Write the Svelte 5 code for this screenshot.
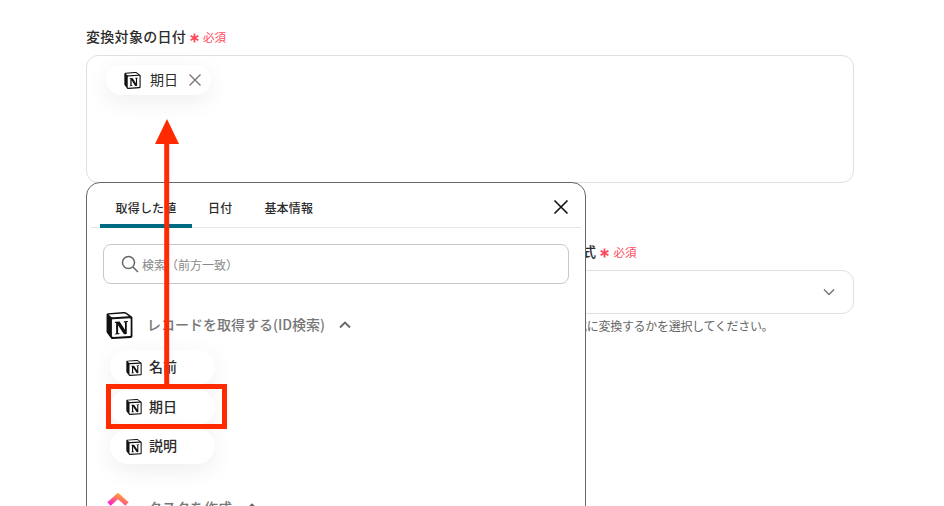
<script>
  const tabs = ["取得した値", "日付", "基本情報"];
  const fields = ["名前", "期日", "説明"];
</script>

{#snippet notion(size)}
  <svg class="notion" width={size} height={size} viewBox="0 0 24 24">
    <path fill="#fff" d="M2 2l15-1 5 4v17l-17 1-4-5z" />
    <path fill="#111" d="M4.459 4.208c.746.606 1.026.56 2.428.466l13.215-.793c.28 0 .047-.28-.046-.326L17.86 1.968c-.42-.326-.981-.7-2.055-.607L3.01 2.295c-.466.046-.56.28-.374.466zm.793 3.08v13.904c0 .747.373 1.027 1.214.98l14.523-.84c.841-.046.935-.56.935-1.167V6.354c0-.606-.233-.933-.748-.887l-15.177.887c-.56.047-.747.327-.747.933zm14.337.745c.093.42 0 .84-.42.888l-.7.14v10.264c-.608.327-1.168.514-1.635.514-.748 0-.935-.234-1.495-.933l-4.577-7.186v6.952L12.21 19s0 .84-1.168.84l-3.222.186c-.093-.186 0-.653.327-.746l.84-.233V9.854L7.822 9.76c-.094-.42.14-1.026.793-1.073l3.456-.233 4.764 7.279v-6.44l-1.215-.14c-.093-.514.28-.887.747-.933zM1.936 1.035l13.31-.98c1.634-.14 2.055-.047 3.082.7l4.249 2.986c.7.513.934.653.934 1.213v16.378c0 1.026-.373 1.634-1.68 1.726l-15.458.934c-.98.047-1.448-.093-1.962-.747l-3.129-4.06c-.56-.747-.793-1.306-.793-1.96V2.667c0-.839.374-1.54 1.447-1.632z" />
  </svg>
{/snippet}

{#snippet required()}
  <span class="req">
    <svg class="star" width="9" height="10" viewBox="0 0 9 10">
      <path d="M4.500 0.500V9.500M0.600 2.700L8.400 7.300M8.400 2.700L0.600 7.300" />
    </svg>
    必須
  </span>
{/snippet}

<div class="page">
  <div class="form">
    <div class="field first">
      <div class="label">変換対象の日付{@render required()}</div>
      <div class="textarea">
        <span class="chip selected">
          {@render notion(17)}
          <span class="chip-text">期日</span>
          <svg width="12" height="12" viewBox="0 0 12 12" class="remove">
            <path d="M0.500 0.500l11 11M11.500 0.500l-11 11" />
          </svg>
        </span>
      </div>
    </div>

    <div class="field second">
      <div class="label offset">変換後の日付形式{@render required()}</div>
      <div class="select">
        <svg width="12" height="8" viewBox="0 0 12 8"><path d="M1 1.500l5 5 5-5" /></svg>
      </div>
      <p class="help">どの形式に変換するかを選択してください。</p>
    </div>
  </div>

  <div class="popup">
    <div class="tabs">
      {#each tabs as tab, i}
        <div class="tab" class:active={i === 0}>{tab}</div>
      {/each}
      <svg class="close" width="16" height="16" viewBox="0 0 16 16">
        <path d="M1.500 1.500l13 13M14.500 1.500l-13 13" />
      </svg>
    </div>

    <div class="body">
      <div class="search">
        <svg width="18" height="18" viewBox="0 0 18 18">
          <circle cx="7.500" cy="7.500" r="6" />
          <path d="M12 12l5 5" />
        </svg>
        <span>検索（前方一致）</span>
      </div>

      <div class="group-head head-notion">
        {@render notion(27)}
        <span class="group-name">レコードを取得する(ID検索)</span>
        <svg class="chev" width="12" height="8" viewBox="0 0 12 8"><path d="M1 6.500l5-5 5 5" /></svg>
      </div>

      <div class="chips">
        {#each fields as f}
          <div class="chip item">
            {@render notion(16)}
            <span class="chip-text">{f}</span>
          </div>
        {/each}
      </div>

      <div class="group-head head-clickup">
        <svg width="24" height="24" viewBox="0 0 24 24">
          <defs>
            <linearGradient id="cu" x1="0" y1="1" x2="1" y2="0">
              <stop offset="0" stop-color="#ff1fd0" />
              <stop offset="1" stop-color="#ffb020" />
            </linearGradient>
          </defs>
          <path d="M3 11l9-8 9 8" fill="none" stroke="url(#cu)" stroke-width="5" />
        </svg>
        <span class="group-name">タスクを作成</span>
        <svg class="chev" width="12" height="8" viewBox="0 0 12 8"><path d="M1 6.500l5-5 5 5" /></svg>
      </div>
    </div>
  </div>

  <svg class="annotation" width="944" height="506" viewBox="0 0 944 506">
    <rect x="108.500" y="386.500" width="116" height="40" fill="none" stroke="#ff2a00" stroke-width="5" />
    <path d="M166.700 140V386" stroke="#ff2a00" stroke-width="5" />
    <path d="M167 119L179 144H155z" fill="#ff2a00" />
  </svg>
</div>

<style>
  :global(body) {
    margin: 0;
    background: #fff;
  }

  .page {
    position: relative;
    width: 944px;
    height: 506px;
    overflow: hidden;
    background: #fff;
    color: #2b2b2b;
    font-family: "Noto Sans CJK JP", "Noto Sans", sans-serif;
  }

  .form {
    display: flex;
    flex-direction: column;
    padding: 27px 90px 0 86px;
  }

  .label {
    display: flex;
    align-items: center;
    height: 18px;
    font-size: 14px;
    font-weight: 500;
    line-height: 18px;
    letter-spacing: 0.3px;
  }

  .label.offset {
    margin-left: 396px;
  }

  .req {
    display: inline-flex;
    align-items: center;
    margin-left: 4px;
    padding-top: 2px;
    font-size: 11.500px;
    font-weight: 400;
    letter-spacing: 0;
    color: #ff4a5c;
  }

  .star {
    margin: 2px 4px 0 0;
  }

  .star path {
    fill: none;
    stroke: #ff4a5c;
    stroke-width: 1.800;
  }

  .field.first .textarea {
    height: 128px;
    margin-top: 10px;
    padding: 9px 19px;
    box-sizing: border-box;
    border: 1px solid #dfdfe5;
    border-radius: 12px;
  }

  .field.second {
    margin-top: 59px;
  }

  .select {
    display: flex;
    align-items: center;
    justify-content: flex-end;
    height: 42px;
    margin-top: 10px;
    padding-right: 18px;
    border: 1px solid #dfdfe5;
    border-radius: 12px;
  }

  .select path {
    fill: none;
    stroke: #777;
    stroke-width: 1.500;
  }

  .help {
    margin: 3px 0 0 454px;
    font-size: 12px;
    line-height: 18px;
    letter-spacing: -0.3px;
    color: #666;
  }

  .chip {
    display: inline-flex;
    align-items: center;
    background: #fff;
    border-radius: 18px;
    box-shadow: 0 6px 24px rgba(0, 0, 0, 0.07);
    box-sizing: border-box;
  }

  .chip-text {
    padding-bottom: 3px;
  }

  .chip.selected {
    width: 105px;
    height: 30px;
    padding-left: 18px;
    gap: 9px;
    font-size: 14px;
  }

  .chip.selected .remove {
    margin-left: 2px;
  }

  .remove path {
    stroke: #777;
    stroke-width: 1.400;
    fill: none;
  }

  .notion {
    flex: none;
  }

  .popup {
    position: absolute;
    left: 86px;
    top: 182px;
    width: 500px;
    height: 340px;
    box-sizing: border-box;
    border: 1px solid #666;
    border-radius: 14px;
    background: #fff;
  }

  .tabs {
    position: relative;
    display: flex;
    height: 44px;
    margin: 0 4px;
    padding-left: 9px;
    border-bottom: 1px solid #e6e6e6;
  }

  .tab {
    display: flex;
    align-items: center;
    justify-content: center;
    height: 45px;
    margin-bottom: -1px;
    padding: 8px 16px 0;
    box-sizing: border-box;
    border-bottom: 4px solid transparent;
    border-radius: 4px 4px 0 0;
    font-size: 12px;
    font-weight: 500;
    letter-spacing: 0.2px;
  }

  .tab.active {
    width: 92px;
    padding: 8px 0 0;
    border-bottom-color: #006a85;
  }

  .close {
    position: absolute;
    right: 12px;
    top: 16px;
  }

  .close path {
    stroke: #111;
    stroke-width: 1.600;
    fill: none;
  }

  .body {
    padding: 16px 16px 0 16px;
  }

  .search {
    display: flex;
    align-items: center;
    gap: 3px;
    height: 40px;
    padding-left: 17px;
    box-sizing: border-box;
    border: 1px solid #c8c8c8;
    border-radius: 8px;
    font-size: 12px;
    color: #888;
  }

  .search circle,
  .search path {
    fill: none;
    stroke: #666;
    stroke-width: 1.500;
  }

  .group-head {
    display: flex;
    align-items: center;
    font-size: 14px;
    font-weight: 500;
    color: #777;
  }

  .head-notion {
    height: 28px;
    margin: 27px 0 0 3px;
  }

  .group-name {
    margin-left: 14px;
    padding-bottom: 3px;
  }

  .chev {
    margin-left: 14px;
    fill: none;
    stroke: #666;
    stroke-width: 1.800;
  }

  .chips {
    display: flex;
    flex-direction: column;
    gap: 4.500px;
    margin: 11px 0 0 7px;
  }

  .chip.item {
    width: 105px;
    height: 35px;
    padding-left: 16px;
    gap: 7px;
    font-size: 14px;
    font-weight: 500;
  }

  .head-clickup {
    height: 24px;
    margin: 29px 0 0 3px;
  }

  .head-clickup .group-name {
    margin: 3px 0 0 18px;
    padding-bottom: 0;
  }

  .head-clickup .chev {
    margin-top: 3px;
  }

  .annotation {
    position: absolute;
    left: 0;
    top: 0;
    pointer-events: none;
  }
</style>
